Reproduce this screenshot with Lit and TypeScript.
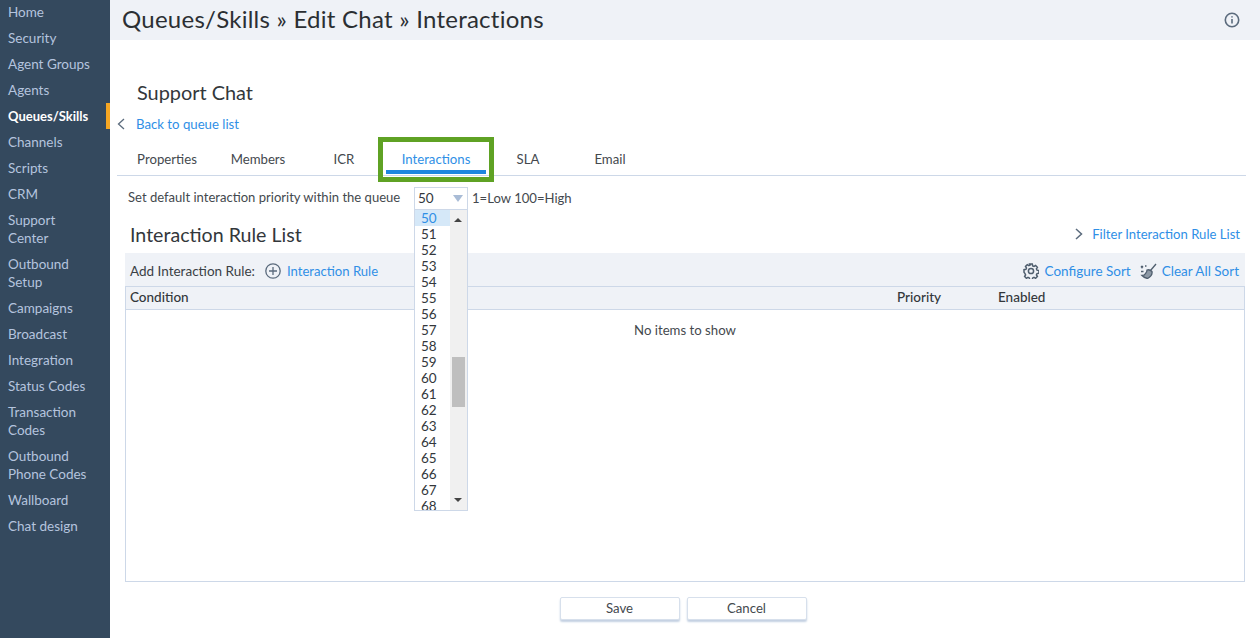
import { LitElement, html, css } from "lit";
import { customElement } from "lit/decorators.js";

const NAV: string[] = ["Home","Security","Agent Groups","Agents","Queues/Skills","Channels","Scripts","CRM","Support Center","Outbound Setup","Campaigns","Broadcast","Integration","Status Codes","Transaction Codes","Outbound Phone Codes","Wallboard","Chat design"];
const TABS: [string, number][] = [["Properties",80],["Members",102],["ICR",70],["Interactions",114],["SLA",70],["Email",94]];
const OPTS = Array.from({length:19},(_,i)=>String(50+i));

@customElement("app-root")
export class AppRoot extends LitElement {
  static styles = css`
    :host{display:block;width:1260px;height:638px;overflow:hidden;font-family:"Lato","Noto Sans",sans-serif;font-size:14px;color:#3a3f45;background:#fff}
    .app{display:flex;height:638px}
    .side{width:110px;flex:none;background:#34495e;overflow:hidden}
    .side ul{list-style:none;margin:-1px 0 0;padding:0}
    .side li{padding:4px 20px 4px 8px;line-height:18px;color:#b4c4de;font-size:13.5px}
    .side li.on{color:#fff;font-weight:700;font-size:13px;box-shadow:inset -4px 0 0 #f5a623}
    .main{flex:1;display:flex;flex-direction:column;min-width:0}
    .head{height:40px;background:#eff2f7;display:flex;align-items:center;justify-content:space-between;padding:0 20px 0 12px;flex:none}
    .head h1{margin:0 0 4px;font-weight:400;font-size:24px;color:#2b2f33;letter-spacing:.25px}
    .content{flex:1;padding:0 15px;display:flex;flex-direction:column;min-height:0}
    h2{margin:41px 0 0 12px;font-weight:400;font-size:19.9px;line-height:22px;color:#33373b}
    .back{display:flex;align-items:center;gap:11px;margin:11px 0 0 -8px;line-height:20px;height:20px;font-size:13.2px;color:#2f8fe6}
    .tabs{display:flex;border-bottom:1px solid #cdd8e8;margin:5px -1px 0 -8px;height:36px;padding-left:10px}
    .tab{box-sizing:border-box;height:36px;text-align:center;line-height:40px;font-size:13.2px;position:relative;color:#44494e}
    .tab.on{color:#2f8fe6}
    .hl{position:absolute;left:-1px;top:-2px;width:116px;height:45px;box-sizing:border-box;border:5px solid #5fa224;pointer-events:none}
    .hl::after{content:"";position:absolute;left:3px;right:3px;top:28px;height:4px;background:#1e86e0}
    .prio{display:flex;align-items:center;height:30px;margin:7px 0 0 3px;font-size:13.05px;position:relative;color:#44494e}
    .prio .lbl{width:286px;margin-top:-2px}
    .sel{box-sizing:border-box;width:54px;height:23px;border:1px solid #cdd8e8;display:flex;align-items:center;justify-content:space-between;padding:0 2px 0 3px;margin-right:4px;color:#33373b;font-size:13.5px}
    .caret{width:0;height:0;border:5.5px solid transparent;border-top:7px solid #a9bcd6;border-bottom:0;margin-right:2px}
    .scale{font-size:13.1px}
    .menu{position:absolute;left:286px;top:26px;width:54px;height:302px;box-sizing:border-box;border:1px solid #cdd8e8;background:#fff;display:flex;overflow:hidden;z-index:3}
    .opts{width:35px;flex:none}
    .opt{height:16px;line-height:16px;padding-left:6px;font-size:13.5px;color:#33373b}
    .opt.on{background:#d5e8f8;color:#2f8fe6}
    .bar{flex:1;background:#f0f0f0;position:relative}
    .thumb{position:absolute;left:2px;right:2px;top:147px;height:50px;background:#bfbfbf}
    .ar{position:absolute;left:4px;width:0;height:0;border:4px solid transparent}
    .ar.up{top:8px;border-bottom:4px solid #444;border-top:0}
    .ar.dn{bottom:8px;border-top:4px solid #444;border-bottom:0}
    .lh{display:flex;justify-content:space-between;align-items:center;margin:6px 5px 0 5px;height:30px}
    .lh h3{margin:0;font-weight:400;font-size:19.6px;color:#33373b}
    .link{color:#2f8fe6;font-size:13.5px;display:flex;align-items:center}
    .link.n{font-size:13.1px}
    .tool{display:flex;justify-content:space-between;align-items:center;box-sizing:border-box;height:33px;margin:4px 0 0;background:#eff2f7;padding:2px 6px 0 5px;font-size:13.5px}
    .tl{display:flex;align-items:center}
    .tbl{flex:1;border:1px solid #cdd8e8;display:flex;flex-direction:column;min-height:0;margin-bottom:15px}
    .th{display:flex;height:22px;line-height:21px;background:#eff2f7;border-bottom:1px solid #cdd8e8;font-size:13.5px;font-weight:500;color:#33373b;padding-left:4px;flex:none}
    .c1{width:767px}.c2{width:101px}
    .empty{text-align:center;margin-top:11px;line-height:18px;font-size:13.2px;color:#44494e}
    .foot{display:flex;justify-content:center;gap:7px;flex:none;margin-bottom:18px;padding-right:4px}
    button{width:120px;height:23px;box-sizing:border-box;background:#fff;border:1px solid #d7e0ec;border-radius:2px;box-shadow:0 2px 2px #c3d0e2;font:inherit;font-size:13.2px;color:#44494e;padding:0 0 2px}
    svg{display:block;flex:none}
    .i-plus{margin:0 6px 0 10px}
    .i-chev{margin-right:9px}
    .i-gear{margin-right:6px}
    .i-broom{margin:0 5px 0 9px}
  `;
  render(){
    return html`<div class="app">
      <nav class="side"><ul>${NAV.map(n=>html`<li class=${n==="Queues/Skills"?"on":""}>${n}</li>`)}</ul></nav>
      <div class="main">
        <header class="head"><h1>Queues/Skills » Edit Chat » Interactions</h1>
          <svg width="16" height="16" viewBox="0 0 16 16" fill="none" stroke="#5b6b7d" stroke-width="1.6"><circle cx="8" cy="8" r="6.7"/><path d="M8 7v4.5M8 4.2v1.4"/></svg>
        </header>
        <div class="content">
          <h2>Support Chat</h2>
          <div class="back"><svg width="8" height="12" viewBox="0 0 8 12" fill="none" stroke="#5b6b7d" stroke-width="1.3"><path d="M7 1 1.5 6 7 11"/></svg><span>Back to queue list</span></div>
          <div class="tabs">${TABS.map(([t,w])=>html`<div class="tab ${t==="Interactions"?"on":""}" style="width:${w}px">${t}${t==="Interactions"?html`<div class="hl"></div>`:""}</div>`)}</div>
          <div class="prio"><span class="lbl">Set default interaction priority within the queue</span>
            <div class="sel"><span>50</span><i class="caret"></i></div><span class="scale">1=Low 100=High</span>
            <div class="menu"><div class="opts">${OPTS.map(o=>html`<div class="opt ${o==="50"?"on":""}">${o}</div>`)}</div><div class="bar"><i class="ar up"></i><i class="thumb"></i><i class="ar dn"></i></div></div>
          </div>
          <div class="lh"><h3>Interaction Rule List</h3><span class="link n"><svg class="i-chev" width="8" height="12" viewBox="0 0 8 12" fill="none" stroke="#5b6b7d" stroke-width="1.5"><path d="M1 1l5.5 5L1 11"/></svg>Filter Interaction Rule List</span></div>
          <div class="tool"><div class="tl"><span>Add Interaction Rule:</span>
            <svg class="i-plus" width="16" height="16" viewBox="0 0 16 16" fill="none" stroke="#5b6b7d" stroke-width="1.3"><circle cx="8" cy="8" r="7.2"/><path d="M8 4v8M4 8h8"/></svg>
            <span class="link n">Interaction Rule</span></div>
            <div class="tl">
            <svg class="i-gear" width="16" height="16" viewBox="0 0 16 16" fill="none" stroke="#4f5e6e" stroke-width="1.5"><circle cx="8" cy="8" r="2.6"/><path d="M6.7 1h2.600l.4 1.900 1.300.6 1.600-1 1.800 1.800-1 1.600.6 1.300 1.900.4v2.600l-1.900.4-.6 1.300 1 1.600-1.800 1.800-1.600-1-1.300.6-.4 1.900H6.700l-.4-1.900-1.300-.6-1.600 1-1.800-1.800 1-1.600-.6-1.300L1 9.300V6.700l1.900-.4.6-1.300-1-1.600 1.800-1.800 1.600 1 1.300-.6z"/></svg>
            <span class="link">Configure Sort</span>
            <svg class="i-broom" width="17" height="16" viewBox="0 0 17 16" fill="none" stroke="#4f5e6e" stroke-width="1.300"><path d="M16 1 10.500 7.500"/><path d="M7 7c1.500-.5 3.500 0 5 1.500 .5 3-1.500 5.500-4.500 7-1.500-.3-4-1.500-5.500-3 1.500 0 3-.5 3.500-2 1-1 1.500-2 1.500-3.500z" fill="#8d99a6"/><path d="M1 3l2 2M3 3 1 5M1 8.500h2.500M5 3h1.500" /></svg>
            <span class="link">Clear All Sort</span></div>
          </div>
          <div class="tbl">
            <div class="th"><span class="c1">Condition</span><span class="c2">Priority</span><span>Enabled</span></div>
            <div class="empty">No items to show</div>
          </div>
          <div class="foot"><button>Save</button><button>Cancel</button></div>
        </div>
      </div>
    </div>`;
  }
}
